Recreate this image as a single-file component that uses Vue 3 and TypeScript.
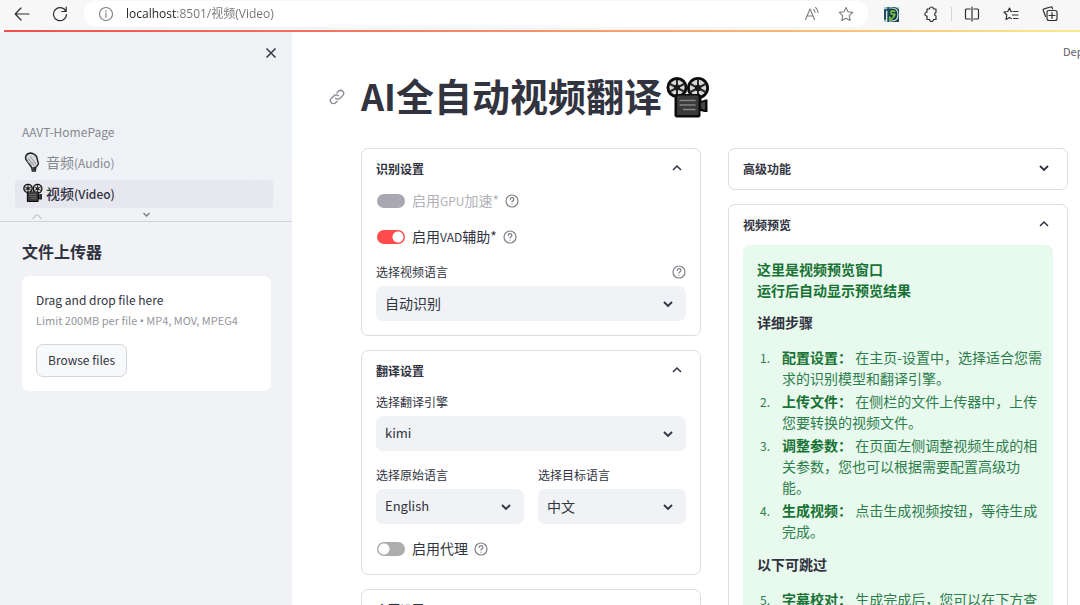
<script setup lang="ts">
import { ref } from 'vue'

interface Step {
  title: string
  text: string
}

const address = ref('localhost:8501/视频(Video)')
const gpu = ref(false)
const vad = ref(true)
const proxy = ref(false)
const videoLanguage = ref('自动识别')
const engine = ref('kimi')
const source = ref('English')
const target = ref('中文')

const steps: Step[] = [
  { title: '配置设置：', text: '在主页-设置中，选择适合您需求的识别模型和翻译引擎。' },
  { title: '上传文件：', text: '在侧栏的文件上传器中，上传您要转换的视频文件。' },
  { title: '调整参数：', text: '在页面左侧调整视频生成的相关参数，您也可以根据需要配置高级功能。' },
  { title: '生成视频：', text: '点击生成视频按钮，等待生成完成。' },
]
const optionalSteps: Step[] = [
  { title: '字幕校对：', text: '生成完成后，您可以在下方查看字幕。' },
]
</script>

<template>
  <div class="window">
    <svg class="sprite" aria-hidden="true">
      <symbol id="camera" viewBox="0 0 44 41">
        <circle cx="11" cy="10.500" r="10.500" fill="#0c0c0c" />
        <circle cx="32" cy="11" r="11" fill="#0c0c0c" />
        <circle cx="11" cy="10.500" r="7.600" fill="#d8d8d8" />
        <circle cx="32" cy="11" r="8.200" fill="#d8d8d8" />
        <path d="M11 3v15M4 7l14 7.500M4 14.500L18 7M32 3v16M24.500 7l15 8M24.500 15l15-8" stroke="#2b2b2b" stroke-width="2" />
        <circle cx="11" cy="10.500" r="3" fill="#1a1a1a" />
        <circle cx="32" cy="11" r="3.200" fill="#1a1a1a" />
        <path d="M9.500 17h24l2 2v5l4-1.500h2V35h-3l-4-1v5l-1.500 1.500H10L8.500 39V18z" fill="#0c0c0c" />
        <rect x="11" y="18.500" width="21.500" height="19.500" rx="1" fill="#3a3a3a" />
        <path d="M13.500 23.500h16M13.500 28h16M17 32.500h12.500" stroke="#858585" stroke-width="1.400" />
        <path d="M35 26l4-1.500V33l-4-1.500z" fill="#454545" />
      </symbol>
      <symbol id="down" viewBox="0 0 12 12">
        <path d="M2 4l4 4 4-4" fill="none" stroke="currentColor" stroke-width="1.800" />
      </symbol>
      <symbol id="up" viewBox="0 0 12 12">
        <path d="M2 8l4-4 4 4" fill="none" stroke="currentColor" stroke-width="1.500" />
      </symbol>
      <symbol id="help" viewBox="0 0 14 14">
        <g fill="none" stroke="currentColor" stroke-width="1.200" stroke-linecap="round">
          <circle cx="7" cy="7" r="6" />
          <path d="M5.200 5.400c.1-2.300 3.700-2.300 3.700 0 0 1.300-1.900 1.400-1.900 2.600M7 10v.2" />
        </g>
      </symbol>
    </svg>

    <header class="browser">
      <button class="tool back" aria-label="Back">
        <svg width="16" height="16" viewBox="0 0 16 16"><path d="M15 8H1.500M7 2L1.200 8 7 14" /></svg>
      </button>
      <button class="tool reload" aria-label="Refresh">
        <svg width="16" height="16" viewBox="0 0 16 16"><path d="M13.800 5.200A6.500 6.500 0 1 0 14.500 8.500M14.200 1v4.500H9.700" /></svg>
      </button>
      <div class="address">
        <svg class="thin" width="16" height="16" viewBox="0 0 16 16"><circle cx="8" cy="8" r="6.500" /><path d="M8 7.200V11.500M8 4.500v1.200" /></svg>
        <input v-model="address" class="url" aria-label="Address" spellcheck="false" />
        <button class="tool thin" aria-label="Read aloud">
          <svg width="16" height="16" viewBox="0 0 16 16"><path d="M1.500 13.500L6 3l4.500 10.500M3 10h6M9.500 3.500q1.500 1 1.500 3M11.500 1.500q2.500 1.800 2.500 5" /></svg>
        </button>
        <button class="tool thin" aria-label="Favorite">
          <svg width="16" height="16" viewBox="0 0 16 16"><path d="M8 1.500l2 4.300 4.700.6-3.400 3.300.8 4.700L8 12.200l-4.100 2.200.8-4.700L1.300 6.400 6 5.800z" /></svg>
        </button>
      </div>
      <div class="extensions">
        <button class="tool" aria-label="Download extension">
          <svg class="badge" width="15" height="15" viewBox="0 0 14 14">
            <rect width="14" height="14" fill="#1d4f60" />
            <path d="M0 0h3v2H0zM10 0h4v2zM0 12h2v2H0z" fill="#a5cbd2" />
            <path d="M2.500 4v10" stroke="#dfe9e4" stroke-width="1.200" />
            <path d="M5 1h2q6 0 6 6t-6 6H5" fill="#12383b" stroke="#dce9e3" stroke-width="1" />
            <path d="M10 4.200q-3.500-1.500-3.500.8t2.500 1.700-.8 3.300-2.700-.5" fill="none" stroke="#7dbb4c" stroke-width="1.700" />
          </svg>
        </button>
        <button class="tool" aria-label="Extensions">
          <svg width="16" height="16" viewBox="0 0 16 16"><path d="M4 3h2.500a2 2 0 0 1 4 0H13v3.500a1.800 1.800 0 0 0 0 3.500v3.500h-2.500a2 2 0 0 1-4 0H4V10H3.200a2 2 0 0 1 0-3.800H4z" /></svg>
        </button>
        <span class="divider"></span>
        <button class="tool" aria-label="Split screen">
          <svg width="16" height="16" viewBox="0 0 16 16"><path d="M6.300 3H2.500q-1 0-1 1v8q0 1 1 1h3.800M9.700 3h3.800q1 0 1 1v8q0 1-1 1H9.700M8 1v14" /></svg>
        </button>
        <button class="tool" aria-label="Favorites">
          <svg width="16" height="16" viewBox="0 0 16 16"><path d="M9 5.500H8L6.500 2 4.800 5.500 1 6l2.800 3-.8 4.500 3.500-2 1.800 1M10.500 5.500H15M9.500 9H15M10.500 12.500H15" /></svg>
        </button>
        <button class="tool" aria-label="Collections">
          <svg width="16" height="16" viewBox="0 0 16 16"><path d="M3.500 10.500L1.300 4.500q-.5-1.300.8-1.700L8.500 1q1.300-.4 1.700.8l.3 1M7 4.500h6q2 0 2 2v6q0 2-2 2H7q-2 0-2-2v-6q0-2 2-2zM10 6.500v6M7 9.500h6" /></svg>
        </button>
      </div>
    </header>
    <div class="rainbow"></div>

    <div class="app">
      <aside class="sidebar">
        <div class="close-row">
          <button class="close" aria-label="Close sidebar">
            <svg width="12" height="12" viewBox="0 0 12 12"><path d="M1.500 1.500l9 9M10.500 1.500l-9 9" /></svg>
          </button>
        </div>
        <nav class="pages">
          <a class="page home" href="#home">AAVT-HomePage</a>
          <a class="page" href="#audio">
            <svg class="emoji" width="20" height="20" viewBox="0 0 22 22">
              <path d="M3 8Q2 2 8 1q4 0 7 4l2 8-3 4-.5 4h-3.200L9.500 17z" fill="#d9dadb" stroke="#27272a" stroke-width="1.600" />
              <path d="M5.500 7l7 8M8 5l6 8M5 10l5 5" stroke="#9b9c9f" stroke-width="1.200" />
              <path d="M10 17l4-1-.5 4h-2.500z" fill="#333" />
            </svg>
            <span>音频<span class="latin">(Audio)</span></span>
          </a>
          <a class="page current" href="#video">
            <svg class="emoji" width="20" height="20"><use href="#camera" /></svg>
            <span>视频<span class="latin">(Video)</span></span>
          </a>
          <a class="page peek" href="#more" aria-label="More pages">
            <svg width="12" height="12" viewBox="0 0 12 12"><path d="M1.500 6l3.500-4h2l3.500 4" fill="none" stroke="#c6c8cd" stroke-width="1.200" /></svg>
          </a>
          <button class="expand" aria-label="Show more pages">
            <svg width="9" height="9"><use href="#down" /></svg>
          </button>
        </nav>
        <section class="uploader">
          <h2>文件上传器</h2>
          <div class="dropzone">
            <p class="drop-title">Drag and drop file here</p>
            <p class="drop-limit">Limit 200MB per file <span class="dot">•</span> MP4, MOV, MPEG4</p>
            <button class="browse">Browse files</button>
          </div>
        </section>
      </aside>

      <main class="main">
        <div class="toolbar"><button class="deploy">Deploy</button></div>
        <div class="title-row">
          <a class="anchor" href="#title" aria-label="Link to heading">
            <svg width="16" height="16" viewBox="0 0 16 16"><path d="M6.700 9.300a3 3 0 0 0 4.300 0l2.700-2.700a3 3 0 0 0-4.300-4.300L7.800 3.900M9.300 6.700a3 3 0 0 0-4.300 0L2.300 9.400a3 3 0 0 0 4.300 4.300l1.600-1.600" /></svg>
          </a>
          <h1 id="title"><span class="title-latin">AI</span>全自动视频翻译</h1>
          <svg class="title-emoji" width="44" height="41"><use href="#camera" /></svg>
        </div>

        <div class="columns">
          <div class="column">
            <details class="card" open>
              <summary>识别设置<svg class="mark" width="12" height="12"><use class="when-closed" href="#down" /><use class="when-open" href="#up" /></svg></summary>
              <div class="body">
                <div class="toggle-row">
                  <label class="toggle disabled"><input v-model="gpu" type="checkbox" disabled /><span>启用<span class="latin">GPU</span>加速*</span></label>
                  <svg class="help" width="14" height="14"><use href="#help" /></svg>
                </div>
                <div class="toggle-row">
                  <label class="toggle"><input v-model="vad" type="checkbox" /><span>启用<span class="latin">VAD</span>辅助*</span></label>
                  <svg class="help" width="14" height="14"><use href="#help" /></svg>
                </div>
                <div class="field">
                  <div class="field-head">
                    <label for="video-language">选择视频语言</label>
                    <svg class="help" width="14" height="14"><use href="#help" /></svg>
                  </div>
                  <div class="select">
                    <select id="video-language" v-model="videoLanguage"><option>自动识别</option><option>中文</option></select>
                    <svg class="arrow" width="12" height="12"><use href="#down" /></svg>
                  </div>
                </div>
              </div>
            </details>

            <details class="card" open>
              <summary>翻译设置<svg class="mark" width="12" height="12"><use class="when-closed" href="#down" /><use class="when-open" href="#up" /></svg></summary>
              <div class="body">
                <div class="field">
                  <div class="field-head"><label for="engine">选择翻译引擎</label></div>
                  <div class="select">
                    <select id="engine" v-model="engine" class="latin"><option>kimi</option></select>
                    <svg class="arrow" width="12" height="12"><use href="#down" /></svg>
                  </div>
                </div>
                <div class="pair">
                  <div class="field">
                    <div class="field-head"><label for="source">选择原始语言</label></div>
                    <div class="select">
                      <select id="source" v-model="source" class="latin"><option>English</option><option>中文</option></select>
                      <svg class="arrow" width="12" height="12"><use href="#down" /></svg>
                    </div>
                  </div>
                  <div class="field">
                    <div class="field-head"><label for="target">选择目标语言</label></div>
                    <div class="select">
                      <select id="target" v-model="target"><option>中文</option><option>English</option></select>
                      <svg class="arrow" width="12" height="12"><use href="#down" /></svg>
                    </div>
                  </div>
                </div>
                <div class="toggle-row">
                  <label class="toggle"><input v-model="proxy" type="checkbox" />启用代理</label>
                  <svg class="help" width="14" height="14"><use href="#help" /></svg>
                </div>
              </div>
            </details>

            <details class="card">
              <summary>字幕设置<svg class="mark" width="12" height="12"><use class="when-closed" href="#down" /><use class="when-open" href="#up" /></svg></summary>
            </details>
          </div>

          <div class="column">
            <details class="card">
              <summary>高级功能<svg class="mark" width="12" height="12"><use class="when-closed" href="#down" /><use class="when-open" href="#up" /></svg></summary>
            </details>
            <details class="card" open>
              <summary>视频预览<svg class="mark" width="12" height="12"><use class="when-closed" href="#down" /><use class="when-open" href="#up" /></svg></summary>
              <div class="body">
                <div class="notice">
                  <p><strong>这里是视频预览窗口<br />运行后自动显示预览结果</strong></p>
                  <h3>详细步骤</h3>
                  <ol>
                    <li v-for="step in steps" :key="step.title"><strong>{{ step.title }}</strong> {{ step.text }}</li>
                  </ol>
                  <h3>以下可跳过</h3>
                  <ol :start="steps.length + 1">
                    <li v-for="step in optionalSteps" :key="step.title"><strong>{{ step.title }}</strong> {{ step.text }}</li>
                  </ol>
                </div>
              </div>
            </details>
          </div>
        </div>
      </main>
    </div>
  </div>
</template>

<style>
body {
  margin: 0;
}
</style>

<style scoped>
.window {
  display: flex;
  flex-direction: column;
  height: 100vh;
  overflow: hidden;
  background: #fff;
  color: #31333f;
  font-family: "Noto Sans CJK SC", "Noto Sans", sans-serif;
  font-size: 14px;
  line-height: 21px;
}
.window * {
  box-sizing: border-box;
}
.sprite {
  position: absolute;
  width: 0;
  height: 0;
}
button {
  margin: 0;
  padding: 0;
  border: 0;
  background: none;
  color: inherit;
  font: inherit;
}
h1, h2, h3, p, ol {
  margin: 0;
}

/* Browser toolbar */
.browser {
  display: flex;
  flex: none;
  align-items: center;
  height: 30px;
  padding: 0 22px 2px 14px;
  background: #f7f7f7;
}
.tool {
  display: flex;
  flex: none;
  width: 16px;
}
.tool svg,
.address svg {
  flex: none;
  fill: none;
  stroke: #2f2f2f;
  stroke-width: 1.2;
  stroke-linejoin: round;
  stroke-linecap: round;
}
.reload {
  margin: 0 16px 0 22px;
}
.address {
  display: flex;
  flex: 1;
  align-items: center;
  gap: 18px;
  height: 26px;
  padding: 0 14px;
  border-radius: 13px;
  background: #fff;
}
.address svg {
  stroke: #7d7d7d;
  stroke-width: 1.1;
}
.url {
  flex: 1;
  min-width: 0;
  height: 20px;
  margin-left: -6px;
  padding: 0;
  border: 0;
  outline: 0;
  background: linear-gradient(90deg, #1f1f1f 50px, #727272 50px);
  -webkit-background-clip: text;
  background-clip: text;
  color: transparent;
  font: 12px/20px "Open Sans", "Noto Sans CJK SC", sans-serif;
}
.extensions {
  display: flex;
  align-items: center;
  gap: 23px;
  margin-left: 16px;
}
.tool .badge {
  stroke: none;
}
.divider {
  width: 1px;
  height: 14px;
  margin: 0 -11px;
  background: #d4d4d4;
}
.rainbow {
  flex: none;
  height: 2px;
  margin-left: 4px;
  background: linear-gradient(90deg, #f0504f, #f4705f 28%, #fbb771 72%, #f8ec8a);
}

/* Sidebar */
.app {
  display: flex;
  flex: 1;
  min-height: 0;
}
.sidebar {
  flex: none;
  width: 292px;
  background: linear-gradient(#eef2f5, #f0f2f6 200px);
}
.close-row {
  display: flex;
  justify-content: flex-end;
  height: 84px;
  padding: 15px 15px 0 0;
}
.close {
  height: 12px;
  display: flex;
}
.close svg {
  fill: none;
  stroke: #3b3e46;
  stroke-width: 1.6;
}
.pages {
  position: relative;
  display: flex;
  flex-direction: column;
  gap: 3px;
  height: 106px;
  padding: 2px 19px 0 15px;
  overflow: hidden;
  border-bottom: 1px solid #cfd2d8;
}
.page {
  display: flex;
  flex: none;
  align-items: center;
  gap: 3px;
  height: 28px;
  padding: 0 8px 2px;
  color: #85888f;
  font-size: 14px;
  text-decoration: none;
}
.page.home {
  padding: 0 7px 2px;
  font-size: 12px;
}
.latin {
  font-size: 12px;
}
.current {
  border-radius: 3px;
  background: #e6e7ef;
  color: #31333f;
  font-weight: 500;
}
.page.peek {
  align-items: flex-start;
  padding: 2px 16px;
}
.expand {
  position: absolute;
  right: 141px;
  bottom: 2px;
  display: flex;
  color: #777b83;
}
.uploader {
  padding: 17px 21px 0 22px;
}
.uploader h2 {
  font-size: 16px;
  line-height: 24px;
}
.dropzone {
  margin-top: 13px;
  padding: 13px 14px 14px;
  border-radius: 7px;
  background: #fff;
}
.drop-title {
  font-size: 12px;
}
.drop-limit {
  color: #94969c;
  font-size: 11px;
}
.dot {
  font-family: "Noto Sans", sans-serif;
}
.browse {
  height: 33px;
  margin-top: 13px;
  padding: 0 11px 2px;
  border: 1px solid #d5d6d9;
  border-radius: 7px;
  background: #f8f9fb;
  font-size: 12px;
}

/* Main area */
.main {
  flex: 1;
  min-width: 0;
  overflow: hidden auto;
  scrollbar-width: none;
  padding: 0 12px 24px 69px;
}
.toolbar {
  display: flex;
  justify-content: flex-end;
  height: 40px;
  margin-right: -31px;
}
.deploy {
  padding-bottom: 2px;
  color: #5c5e68;
  font-size: 11px;
}
.title-row {
  display: flex;
  align-items: center;
  height: 50px;
  margin: 0 0 26px -32px;
}
.anchor {
  display: flex;
  margin-right: 16px;
}
.anchor svg {
  fill: none;
  stroke: #85878e;
  stroke-width: 1.3;
  stroke-linecap: round;
}
h1 {
  padding-bottom: 4px;
  font-size: 38px;
  line-height: 46px;
  white-space: nowrap;
}
.title-latin {
  font-size: 36px;
}
.title-emoji {
  margin-left: 4px;
}
.columns {
  display: grid;
  grid-template-columns: 1fr 1fr;
  gap: 27px;
  align-items: start;
}
.column {
  display: grid;
  gap: 14px;
  min-width: 0;
}
.card {
  border: 1px solid #dcdde0;
  border-radius: 7px;
}
summary {
  display: flex;
  align-items: center;
  justify-content: space-between;
  height: 40px;
  padding: 0 17px 2px 14px;
  font-size: 12px;
  font-weight: 700;
  list-style: none;
}
.mark,
.arrow {
  color: #31333f;
}
.card[open] .when-closed,
.card:not([open]) .when-open {
  display: none;
}
.body {
  display: grid;
  gap: 13px;
  padding: 0 14px 14px;
}
.toggle-row {
  display: flex;
  align-items: center;
  gap: 6px;
  height: 23px;
}
.toggle {
  display: flex;
  align-items: center;
  gap: 7px;
}
.toggle.disabled {
  color: #b0b1b7;
}
.toggle input {
  appearance: none;
  width: 28px;
  height: 14px;
  margin: 0 0 0 1px;
  border-radius: 7px;
  background: radial-gradient(circle at 7px 7px, #fff 5px, transparent 6px) #adadae;
}
.toggle input:checked {
  background: radial-gradient(circle at 21px 7px, #fff 5px, transparent 6px) #ff4b4b;
}
.toggle input:disabled {
  background: #a9a8b1;
}
.help {
  color: #7f8187;
}
.field-head {
  display: flex;
  align-items: center;
  justify-content: space-between;
  height: 22px;
  margin-bottom: 3px;
  font-size: 12px;
}
.field-head label {
  padding-bottom: 2px;
}
.select {
  display: grid;
  align-items: center;
}
.select > * {
  grid-area: 1 / 1;
}
.select select {
  appearance: none;
  width: 100%;
  height: 35px;
  padding: 0 30px 2px 9px;
  border: 0;
  border-radius: 7px;
  background: #f0f2f6;
  color: inherit;
  font-family: inherit;
  font-size: 14px;
}
.select select.latin {
  font-size: 13px;
}
.arrow {
  justify-self: end;
  margin-right: 12px;
  pointer-events: none;
}
.pair {
  display: grid;
  grid-template-columns: 1fr 1fr;
  gap: 14px;
}

/* Preview notice */
.notice {
  padding: 14px 10px 14px 14px;
  border-radius: 7px;
  background: #e8f9ee;
  color: #2e7d4c;
}
.notice strong {
  color: #177233;
}
.notice h3 {
  margin: 11px 0 14px;
  color: #31333f;
  font-size: 14px;
  line-height: 21px;
}
.notice ol + h3 {
  margin-top: 12px;
}
.notice ol {
  display: grid;
  gap: 2px;
  padding-left: 25px;
}
li::marker {
  content: counter(list-item) ".\2003";
  font-size: 12px;
}
</style>
